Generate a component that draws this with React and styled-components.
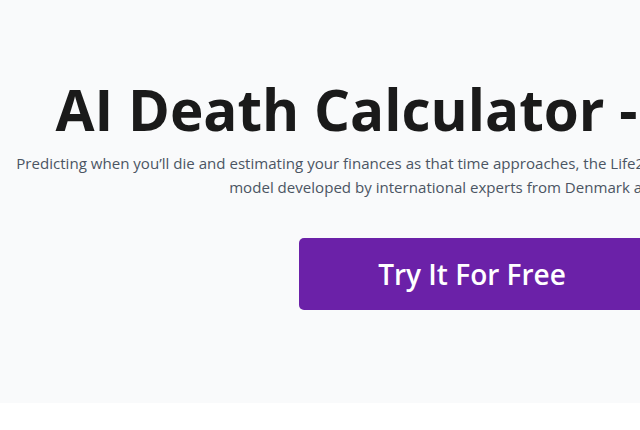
import React from "react";
import styled, { createGlobalStyle } from "styled-components";

const Global = createGlobalStyle`
  html, body { margin: 0; padding: 0; background: #ffffff; overflow: hidden; }
  body { font-family: "Open Sans", "Noto Sans", sans-serif; }
`;

const Page = styled.div`
  width: 944px;
`;

const Hero = styled.section`
  background: #f9fafb;
  height: 403px;
  display: flex;
  flex-direction: column;
  align-items: center;
  padding-top: 74px;
  box-sizing: border-box;
  text-align: center;
`;

const Title = styled.h1`
  margin: 0;
  font-size: 56.6px;
  line-height: 72px;
  font-weight: 700;
  color: #1a1a1a;
  white-space: nowrap;
`;

const Subtitle = styled.p`
  margin: 5px 0 0;
  font-size: 15.08px;
  line-height: 24px;
  color: #4b5563;
  white-space: nowrap;
`;

const CtaButton = styled.a`
  margin-top: 39px;
  width: 346px;
  height: 72px;
  display: flex;
  align-items: center;
  justify-content: center;
  background: #6b21a8;
  color: #ffffff;
  border-radius: 5px;
  font-size: 28px;
  font-weight: 600;
  text-decoration: none;
`;

export default function App() {
  return (
    <Page>
      <Global />
      <Hero>
        <Title>AI Death Calculator - Life2Vec</Title>
        <Subtitle>
          Predicting when you’ll die and estimating your finances as that time approaches, the Life2vec AI is an advanced lifespan prediction
          <br />
          model developed by international experts from Denmark and the US.
        </Subtitle>
        <CtaButton href="#">Try It For Free</CtaButton>
      </Hero>
    </Page>
  );
}
